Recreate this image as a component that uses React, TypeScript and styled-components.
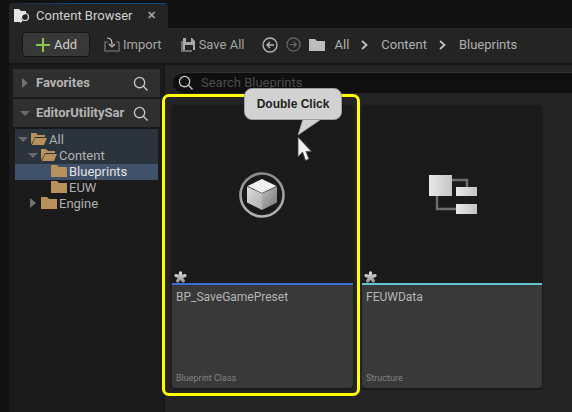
import React from "react"
import styled, { createGlobalStyle } from "styled-components"

const GlobalStyle = createGlobalStyle`
  html, body {
    margin: 0;
    padding: 0;
    background: #111111;
  }
  * {
    box-sizing: border-box;
  }
`

const S = {
  Page: styled.div`
    width: 572px;
    height: 412px;
    position: relative;
    overflow: hidden;
    display: flex;
    flex-direction: column;
    padding-left: 9px;
    background: #111111;
    font-family: Roboto, "Liberation Sans", sans-serif;
    color: #c0c0c0;
  `,
  TabBar: styled.div`
    height: 28px;
    flex: none;
    display: flex;
    align-items: flex-end;
  `,
  Tab: styled.div`
    width: 159px;
    height: 25px;
    display: flex;
    align-items: center;
    padding: 0 0 0 5px;
    background: linear-gradient(90deg, #242424, #0c4a80 40%, #0c4a80) top / 100% 1px no-repeat, #242424;
    border-radius: 4px 4px 0 0;
    font-size: 13px;
    color: #d0d0d0;
    gap: 6px;
  `,
  TabClose: styled.span`
    margin-left: 9px;
    font-size: 11px;
    font-weight: 700;
    color: #a0a0a0;
  `,
  Toolbar: styled.div`
    height: 35px;
    flex: none;
    display: flex;
    align-items: center;
    padding: 0 0 2px 13px;
    background: #242424;
    font-size: 13px;
  `,
  AddButton: styled.div`
    width: 68px;
    height: 25px;
    display: flex;
    align-items: center;
    gap: 4px;
    padding-left: 13px;
    background: #383838;
    border: 1px solid #161616;
    border-radius: 4px;
    color: #d0d0d0;
    margin-right: 14px;
  `,
  ToolButton: styled.div<{ $gap?: number; $after?: number }>`
    display: flex;
    align-items: center;
    gap: ${(p) => p.$gap ?? 3}px;
    margin-right: ${(p) => p.$after ?? 0}px;
    color: #a4a4a4;
  `,
  Crumb: styled.span`
    color: #b0b0b0;
    margin: 0 12px 0 13px;
    &:first-of-type {
      margin-left: 0;
    }
  `,
  Body: styled.div`
    flex: 1;
    display: flex;
    border-top: 2px solid #161616;
    min-height: 0;
  `,
  Sidebar: styled.div`
    width: 154px;
    flex: none;
    padding: 4px 3px 0 4px;
    background: #1a1a1a;
    display: flex;
    flex-direction: column;
    gap: 2px;
  `,
  SideHeader: styled.div`
    height: 28px;
    flex: none;
    display: flex;
    align-items: center;
    padding: 0 12px 0 7px;
    background: #2f2f2f;
    font-size: 13px;
    font-weight: 700;
    color: #b4b4b4;
    white-space: nowrap;
  `,
  HeaderCaret: styled.span`
    width: 10px;
    flex: none;
    display: flex;
    justify-content: center;
  `,
  SideLabel: styled.span`
    flex: 1;
    margin: 0 0 2px 6px;
    overflow: hidden;
  `,
  Tree: styled.div`
    flex: 1;
    padding: 0 2px;
    background: #1a1a1a;
  `,
  TreeBlock: styled.div`
    background: #2b333d;
    padding-top: 3px;
  `,
  TreeRow: styled.div<{ $depth: number; $selected?: boolean }>`
    height: 16px;
    display: flex;
    align-items: center;
    gap: 2px;
    padding: 0 0 2px ${(p) => p.$depth}px;
    background: ${(p) => (p.$selected ? "#3f5269" : "transparent")};
    color: ${(p) => (p.$selected ? "#e4e4e4" : "#b0b0b0")};
    font-size: 13px;
  `,
  Caret: styled.span`
    width: 10px;
    margin-right: 1px;
    display: flex;
    justify-content: center;
    flex: none;
  `,
  Main: styled.div`
    flex: 1;
    display: flex;
    flex-direction: column;
    min-width: 0;
    background: #242424;
    border-left: 2px solid #161616;
  `,
  SearchBar: styled.div`
    height: 28px;
    flex: none;
    padding: 7px 0 0 8px;
  `,
  SearchField: styled.div`
    height: 21px;
    display: flex;
    align-items: center;
    padding: 0 0 1px 5px;
    gap: 8px;
    background: #0f0f0f;
    border-top: 1px solid #333333;
    border-radius: 10px 0 0 10px;
    color: #4c4c4c;
    font-size: 13px;
  `,
  Tiles: styled.div`
    flex: 1;
    display: grid;
    grid-template-columns: 181px 180px;
    grid-template-rows: 283px;
    gap: 9px;
    padding: 12px 0 0 7px;
  `,
  Tile: styled.div`
    display: flex;
    flex-direction: column;
    border-radius: 4px;
    background: #1a1a1a;
    box-shadow: 0 1px 3px rgba(0, 0, 0, 0.5);
    overflow: hidden;
  `,
  Thumb: styled.div<{ $left?: number; $right?: number }>`
    height: 178px;
    flex: none;
    position: relative;
    display: flex;
    align-items: center;
    justify-content: center;
    padding: 2px ${(p) => p.$right ?? 0}px 0 ${(p) => p.$left ?? 0}px;
  `,
  Star: styled.svg`
    position: absolute;
    left: 2px;
    bottom: 0;
  `,
  Info: styled.div<{ $accent: string }>`
    flex: 1;
    display: flex;
    flex-direction: column;
    justify-content: space-between;
    padding: 5px 4px 5px 4px;
    background: #393939;
    border-top: 2px solid ${(p) => p.$accent};
  `,
  TileName: styled.div`
    font-size: 12px;
    color: #b4b4b4;
  `,
  TileKind: styled.div`
    font-size: 9px;
    color: #848484;
  `,
  Highlight: styled.div`
    position: absolute;
    left: 162px;
    top: 94px;
    width: 198px;
    height: 302px;
    border: 3px solid #ffff00;
    border-radius: 7px;
  `,
  Callout: styled.div`
    position: absolute;
    left: 244px;
    top: 88px;
    width: 98px;
    height: 32px;
    display: flex;
    align-items: center;
    justify-content: center;
    background: #d2d2d2;
    border: 1px solid #a0a0a0;
    border-radius: 8px;
    font-family: "Liberation Sans", Arial, sans-serif;
    font-size: 12px;
    font-weight: 700;
    color: #222222;
  `,
  CalloutTail: styled.svg`
    position: absolute;
    left: 296px;
    top: 118px;
  `,
  Cursor: styled.svg`
    position: absolute;
    left: 297px;
    top: 135px;
  `,
}

const PlainFolder = () => (
  <svg width="16" height="12" viewBox="0 1 16 12">
    <path d="M0 1h6l2 2h8v10H0z" fill="#b8915a" />
  </svg>
)

const OpenFolder = () => (
  <svg width="16" height="12" viewBox="0 1 16 12">
    <path d="M0 1h5l2 2h7v2H4L1 11 0 12z" fill="#b8915a" />
    <path d="M4 6h12l-3 7H1z" fill="#b8915a" />
  </svg>
)

const Down = () => (
  <svg width="10" height="5" viewBox="0 0 10 5">
    <path d="M0 0h10L5 5z" fill="#6a6a6a" />
  </svg>
)

const Right = () => (
  <svg width="6" height="10" viewBox="0 0 6 10">
    <path d="M0 0l6 5-6 5z" fill="#707070" />
  </svg>
)

const Lens = () => (
  <svg width="15" height="15" viewBox="0 0 16 16" fill="none" stroke="#c8c8c8" strokeWidth="1.4">
    <circle cx="7" cy="7" r="5.500" />
    <path d="M11 11l4.500 4.500" />
  </svg>
)

const Chevron = () => (
  <svg width="7" height="10" viewBox="0 0 7 10" fill="none" stroke="#c0c0c0" strokeWidth="1.800">
    <path d="M1 1l4.500 4L1 9" />
  </svg>
)

const DirtyStar = () => (
  <S.Star width="13" height="12" viewBox="0 0 13 12">
    <defs>
      <linearGradient id="starFill" gradientUnits="userSpaceOnUse" x1="0" y1="0" x2="0" y2="12">
        <stop offset="0" stopColor="#e4e4e4" />
        <stop offset="1" stopColor="#8c8c8c" />
      </linearGradient>
    </defs>
    <path
      d="M6.500 6V1.800M6.500 6L2 4.600M6.500 6L11 4.600M6.500 6L3.700 10M6.500 6L9.300 10"
      fill="none"
      stroke="url(#starFill)"
      strokeWidth="3.200"
      strokeLinecap="round"
    />
  </S.Star>
)

const BlueprintIcon = () => (
  <svg width="46" height="46" viewBox="0 0 46 46">
    <defs>
      <linearGradient id="cubeRight" x1="0" y1="0" x2="1" y2="1">
        <stop offset="0" stopColor="#bcbcbc" />
        <stop offset="1" stopColor="#767676" />
      </linearGradient>
      <linearGradient id="cubeLeft" x1="0" y1="0" x2="1" y2="1">
        <stop offset="0" stopColor="#dcdcdc" />
        <stop offset="1" stopColor="#b0b0b0" />
      </linearGradient>
      <linearGradient id="cubeRing" x1="0" y1="0" x2="0" y2="1">
        <stop offset="0" stopColor="#8c8c8c" />
        <stop offset="1" stopColor="#b4b4b4" />
      </linearGradient>
    </defs>
    <circle cx="23" cy="23" r="21.500" fill="none" stroke="url(#cubeRing)" strokeWidth="2.600" />
    <path d="M23 7l14.500 7L23 21 8.500 14z" fill="#f0f0f0" />
    <path d="M8 14.500L23 21.500V38L8 30.500z" fill="url(#cubeLeft)" />
    <path d="M38 14.500L23 21.500V38l15-7.500z" fill="url(#cubeRight)" />
  </svg>
)

const StructureIcon = () => (
  <svg width="49" height="40" viewBox="0 0 49 40">
    <defs>
      <linearGradient id="structBox" x1="0" y1="0" x2="1" y2="0">
        <stop offset="0" stopColor="#e8e8e8" />
        <stop offset="1" stopColor="#c4c4c4" />
      </linearGradient>
    </defs>
    <path d="M23 5h15v8M8 20v14h20" fill="none" stroke="#6c6c6c" strokeWidth="2.500" />
    <rect x="0" y="0" width="23" height="21" fill="url(#structBox)" />
    <rect x="27" y="12" width="21" height="9" fill="url(#structBox)" />
    <rect x="27" y="29" width="21" height="10" fill="url(#structBox)" />
  </svg>
)

export default function App() {
  return (
    <>
      <GlobalStyle />
      <S.Page>
        <S.TabBar>
          <S.Tab>
            <svg width="16" height="15" viewBox="0 0 16 15">
              <path d="M0 1h5l2 2h5v3a5 5 0 0 0-4 8H0z" fill="#e4e4e4" />
              <circle cx="11" cy="9" r="3.500" fill="none" stroke="#e4e4e4" strokeWidth="1.200" />
              <path d="M8.500 11.500L6 14.500" stroke="#e4e4e4" strokeWidth="1.300" />
            </svg>
            Content Browser
            <S.TabClose>✕</S.TabClose>
          </S.Tab>
        </S.TabBar>

        <S.Toolbar>
          <S.AddButton>
            <svg width="14" height="14" viewBox="0 0 14 14">
              <path d="M7 0v14M0 7h14" stroke="#8bc24a" strokeWidth="2" />
            </svg>
            Add
          </S.AddButton>
          <S.ToolButton $after={19}>
            <svg width="16" height="16" viewBox="0 0 16 16" fill="none">
              <path d="M4 5H1v9h14V5h-3" stroke="#808080" strokeWidth="1.200" />
              <path d="M3 1c4 0 5 2 5 7" stroke="#c8c8c8" strokeWidth="1.200" />
              <path d="M5 7l3 3 3-3" stroke="#c8c8c8" strokeWidth="1.200" />
            </svg>
            Import
          </S.ToolButton>
          <S.ToolButton $after={18} $gap={4}>
            <svg width="14" height="14" viewBox="0 0 14 14">
              <path d="M0 3h2v9h9v2H0z" fill="#707070" />
              <path d="M2 0h9l3 3v9H2z" fill="#a8a8a8" />
              <rect x="5" y="0" width="5" height="4" fill="#242424" />
              <rect x="4" y="7" width="8" height="5" fill="#242424" />
            </svg>
            Save All
          </S.ToolButton>
          <S.ToolButton $after={8}>
            <svg width="16" height="16" viewBox="0 0 16 16" fill="none" stroke="#b8b8b8" strokeWidth="1.300">
              <circle cx="8" cy="8" r="7" />
              <path d="M12 8H5M8 5L5 8l3 3" />
            </svg>
          </S.ToolButton>
          <S.ToolButton $after={8}>
            <svg width="15" height="15" viewBox="0 0 16 16" fill="none" stroke="#6a6a6a" strokeWidth="1.300">
              <circle cx="8" cy="8" r="7" />
              <path d="M4 8h7M8 5l3 3-3 3" />
            </svg>
          </S.ToolButton>
          <S.ToolButton $after={9}>
            <svg width="16" height="12" viewBox="0 0 16 12">
              <path d="M0 0h6l2 2h8v10H0z" fill="#bcbcbc" />
            </svg>
          </S.ToolButton>
          <S.Crumb>All</S.Crumb>
          <Chevron />
          <S.Crumb>Content</S.Crumb>
          <Chevron />
          <S.Crumb>Blueprints</S.Crumb>
        </S.Toolbar>

        <S.Body>
          <S.Sidebar>
            <S.SideHeader>
              <S.HeaderCaret><Right /></S.HeaderCaret>
              <S.SideLabel>Favorites</S.SideLabel>
              <Lens />
            </S.SideHeader>
            <S.SideHeader>
              <S.HeaderCaret><Down /></S.HeaderCaret>
              <S.SideLabel>EditorUtilitySar</S.SideLabel>
              <Lens />
            </S.SideHeader>
            <S.Tree>
              <S.TreeBlock>
                <S.TreeRow $depth={3}>
                  <S.Caret><Down /></S.Caret>
                  <OpenFolder />
                  All
                </S.TreeRow>
                <S.TreeRow $depth={13}>
                  <S.Caret><Down /></S.Caret>
                  <OpenFolder />
                  Content
                </S.TreeRow>
                <S.TreeRow $depth={36} $selected>
                  <PlainFolder />
                  Blueprints
                </S.TreeRow>
              </S.TreeBlock>
              <S.TreeRow $depth={36}>
                <PlainFolder />
                EUW
              </S.TreeRow>
              <S.TreeRow $depth={13}>
                <S.Caret><Right /></S.Caret>
                <PlainFolder />
                Engine
              </S.TreeRow>
            </S.Tree>
          </S.Sidebar>
          <S.Main>
            <S.SearchBar>
              <S.SearchField>
                <Lens />
                Search Blueprints
              </S.SearchField>
            </S.SearchBar>
            <S.Tiles>
              <S.Tile>
                <S.Thumb $right={1}>
                  <BlueprintIcon />
                  <DirtyStar />
                </S.Thumb>
                <S.Info $accent="#3a6fd8">
                  <S.TileName>BP_SaveGamePreset</S.TileName>
                  <S.TileKind>Blueprint Class</S.TileKind>
                </S.Info>
              </S.Tile>
              <S.Tile>
                <S.Thumb $left={3}>
                  <StructureIcon />
                  <DirtyStar />
                </S.Thumb>
                <S.Info $accent="#5cc8d0">
                  <S.TileName>FEUWData</S.TileName>
                  <S.TileKind>Structure</S.TileKind>
                </S.Info>
              </S.Tile>
            </S.Tiles>
          </S.Main>
        </S.Body>

        <S.Highlight />
        <S.CalloutTail width="26" height="20" viewBox="0 0 26 20">
          <path d="M7 0L2 17 24 2V0z" fill="#d2d2d2" />
          <path d="M7 2L2 17 24 2" fill="none" stroke="#a0a0a0" strokeWidth="0.800" />
        </S.CalloutTail>
        <S.Callout>Double Click</S.Callout>
        <S.Cursor width="16" height="27" viewBox="0 0 16 27">
          <path d="M1 2v20l4.500-5 3 8.500 3.500-1.500-3-7.500h5.500z" fill="#f2f2f2" stroke="#444444" strokeWidth="0.800" />
        </S.Cursor>
      </S.Page>
    </>
  )
}
